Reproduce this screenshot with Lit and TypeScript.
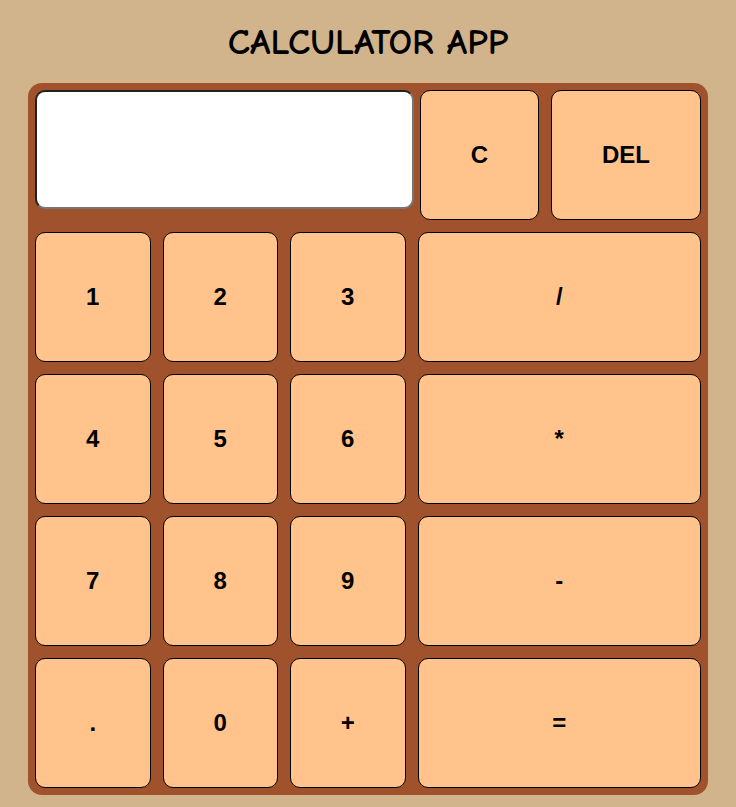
import { LitElement, html, css } from "lit";
import { customElement, state } from "lit/decorators.js";

const ROWS = [
  ["1", "2", "3", "/"],
  ["4", "5", "6", "*"],
  ["7", "8", "9", "-"],
  [".", "0", "+", "="],
];

@customElement("app-root")
export class AppRoot extends LitElement {
  static styles = css`
    :host {
      display: block;
      box-sizing: border-box;
      min-height: 100vh;
      padding: 12px 28px;
      background: #d2b48c;
      color: #000;
      font-family: "Liberation Sans", Arial, sans-serif;
    }
    .title {
      margin: 0;
      padding: 6px 0 17px;
      text-align: center;
      font-family: "Comic Sans MS", "Comic Neue", Lato, sans-serif;
      font-size: 37px;
      line-height: 48px;
      font-weight: 700;
    }
    .panel {
      display: grid;
      gap: 12px;
      padding: 7px;
      border-radius: 14px;
      background: #a0522d;
    }
    .top {
      display: grid;
      grid-template-columns: 504fr 150fr;
      gap: 12px;
    }
    .entry {
      display: grid;
      grid-template-columns: 379fr 119fr;
      gap: 6px;
    }
    .keys {
      display: grid;
      grid-template-columns: repeat(3, 11fr) 27fr;
      gap: 12px;
    }
    .display {
      box-sizing: border-box;
      width: 100%;
      min-width: 0;
      align-self: start;
      margin: 0;
      padding: 43px 12px 44px;
      border: 2px inset #767676;
      border-radius: 10px;
      background: #fff;
      font: 700 24px/28px "Liberation Sans", Arial, sans-serif;
      text-align: right;
    }
    .key {
      min-width: 0;
      margin: 0;
      padding: 50px 0;
      border: 1px solid #000;
      border-radius: 10px;
      background: #ffc38b;
      color: #000;
      font: 700 24px/28px "Liberation Sans", Arial, sans-serif;
      cursor: pointer;
    }
  `;

  @state() private value = "";

  private press(key: string) {
    if (key === "C") this.value = "";
    else if (key === "DEL") this.value = this.value.slice(0, -1);
    else if (key === "=") this.value = this.evaluate(this.value);
    else this.value += key;
  }

  private evaluate(text: string): string {
    const tokens = text.match(/\d*\.?\d+|[-+*/]/g);
    if (!tokens) return "";
    const terms: number[] = [];
    let op = "+";
    for (const token of tokens) {
      if (/^[-+*/]$/.test(token)) {
        op = token;
        continue;
      }
      const n = Number(token);
      if (op === "+") terms.push(n);
      else if (op === "-") terms.push(-n);
      else if (op === "*") terms.push((terms.pop() ?? 0) * n);
      else terms.push((terms.pop() ?? 0) / n);
    }
    return String(terms.reduce((sum, n) => sum + n, 0));
  }

  private key(label: string) {
    return html`<button class="key" type="button" @click=${() => this.press(label)}>${label}</button>`;
  }

  render() {
    return html`
      <h1 class="title">CALCULATOR APP</h1>
      <main class="panel">
        <div class="top">
          <div class="entry">
            <input class="display" type="text" aria-label="Result" readonly .value=${this.value} />
            ${this.key("C")}
          </div>
          ${this.key("DEL")}
        </div>
        <div class="keys">${ROWS.flat().map((label) => this.key(label))}</div>
      </main>
    `;
  }
}
